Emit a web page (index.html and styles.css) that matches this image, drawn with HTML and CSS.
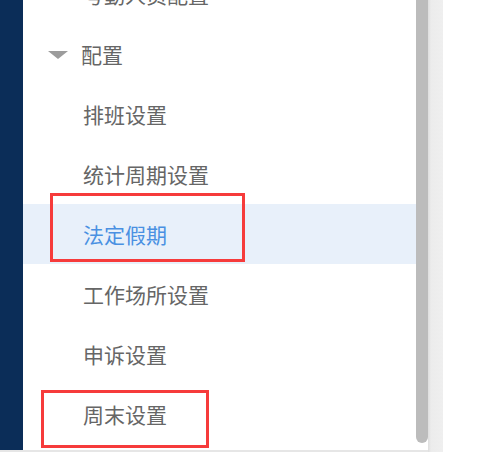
FILE: index.html
```html
<!DOCTYPE html>
<html lang="zh-CN">
<head>
<meta charset="utf-8">
<title>配置</title>
<link rel="stylesheet" href="styles.css">
</head>
<body>
<div class="app">
  <div class="pane">
    <div class="pane-body">
      <div class="nav"></div>
      <div class="menu">
        <ul class="list">
          <li class="item">考勤人员配置</li>
          <li class="group"><span class="caret"></span><span>配置</span></li>
          <li class="item">排班设置</li>
          <li class="item">统计周期设置</li>
          <li class="item active">法定假期</li>
          <li class="item">工作场所设置</li>
          <li class="item">申诉设置</li>
          <li class="item">周末设置</li>
        </ul>
        <div class="mark mark-a"></div>
        <div class="mark mark-b"></div>
      </div>
      <div class="scroll"><div class="thumb"></div></div>
    </div>
    <div class="hbar"></div>
  </div>
  <div class="edge"></div>
  <div class="main"></div>
</div>
</body>
</html>
```
FILE: styles.css
```css
html, body {
  margin: 0;
  padding: 0;
  background: #ffffff;
}
body {
  font-family: "Noto Sans CJK SC", "Noto Sans", sans-serif;
  overflow: hidden;
}
.app {
  display: flex;
  height: 452px;
  width: 496px;
}
.pane {
  width: 428px;
  display: flex;
  flex-direction: column;
}
.pane-body {
  display: flex;
  height: 450px;
}
.hbar {
  height: 2px;
  background: #e6e6e6;
}
.nav {
  width: 23px;
  background: #0b2d58;
}
.menu {
  flex: 1;
  position: relative;
  overflow: hidden;
  background: #ffffff;
}
.list {
  list-style: none;
  margin: -36px 0 0 0;
  padding: 0;
}
.item, .group {
  height: 60px;
  display: flex;
  align-items: center;
  font-size: 21px;
  color: #666666;
  white-space: nowrap;
}
.item {
  padding-left: 60px;
}
.group {
  padding-left: 25px;
  gap: 13px;
}
.caret {
  width: 0;
  height: 0;
  border-left: 10px solid transparent;
  border-right: 10px solid transparent;
  border-top: 8px solid #9c9c9c;
  margin-top: 2px;
}
.item.active {
  background: #e8f0fa;
  color: #4a90e2;
}
.mark {
  position: absolute;
  box-sizing: border-box;
  border: 3px solid #f63b3b;
}
.mark-a {
  left: 27px;
  top: 193px;
  width: 195px;
  height: 69px;
}
.mark-b {
  left: 18px;
  top: 390px;
  width: 168px;
  height: 58px;
}
.scroll {
  width: 12px;
  background: #ffffff;
}
.thumb {
  height: 443px;
  background: #bcbcbc;
  border-radius: 0 0 6px 6px;
}
.edge {
  width: 15px;
  background: linear-gradient(to right, #dedede, #ececec 3px, #efefef);
}
.main {
  flex: 1;
  background: #ffffff;
}
```
